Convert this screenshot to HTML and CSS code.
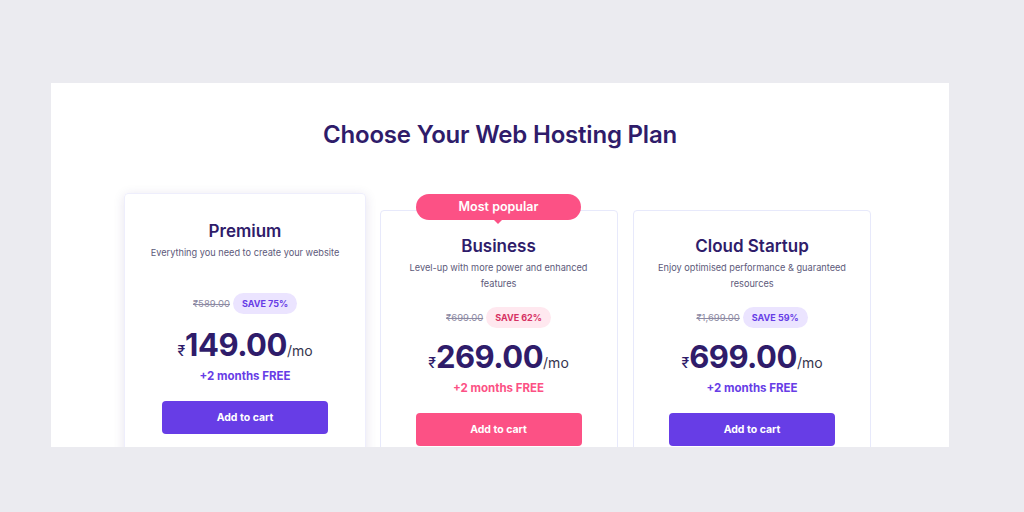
FILE: index.html
```html
<!DOCTYPE html>
<html lang="en">

<head>
    <meta charset="UTF-8">
    <meta name="viewport" content="width=device-width, initial-scale=1.0">
    <title>Choose Your Web Hosting Plan</title>
    <link rel="stylesheet" href="styles.css">
</head>

<body>
    <div class="panel">
        <h1 class="title">Choose Your Web Hosting Plan</h1>

        <div class="plans">
            <div class="card featured">
                <h2 class="plan-name">Premium</h2>
                <p class="plan-desc">Everything you need to create your website</p>
                <div class="discount">
                    <span class="old-price">₹589.00</span>
                    <span class="save">SAVE 75%</span>
                </div>
                <div class="price">
                    <span class="currency">₹</span><span class="amount">149.00</span><span class="period">/mo</span>
                </div>
                <div class="bonus">+2 months FREE</div>
                <button type="button" class="cart-btn">Add to cart</button>
            </div>

            <div class="card popular">
                <div class="ribbon">Most popular</div>
                <h2 class="plan-name">Business</h2>
                <p class="plan-desc">Level-up with more power and enhanced features</p>
                <div class="discount">
                    <span class="old-price">₹699.00</span>
                    <span class="save">SAVE 62%</span>
                </div>
                <div class="price">
                    <span class="currency">₹</span><span class="amount">269.00</span><span class="period">/mo</span>
                </div>
                <div class="bonus">+2 months FREE</div>
                <button type="button" class="cart-btn">Add to cart</button>
            </div>

            <div class="card">
                <h2 class="plan-name">Cloud Startup</h2>
                <p class="plan-desc">Enjoy optimised performance &amp; guaranteed resources</p>
                <div class="discount">
                    <span class="old-price">₹1,699.00</span>
                    <span class="save">SAVE 59%</span>
                </div>
                <div class="price">
                    <span class="currency">₹</span><span class="amount">699.00</span><span class="period">/mo</span>
                </div>
                <div class="bonus">+2 months FREE</div>
                <button type="button" class="cart-btn">Add to cart</button>
            </div>
        </div>
    </div>
</body>

</html>
```

FILE: styles.css
```css
body {
    margin: 0;
    background-color: #ebebf0;
    font-family: Inter, "Noto Sans", sans-serif;
    color: #2f1c6a;
}

.panel {
    margin: 83px 0 0 51px;
    width: 898px;
    height: 364px;
    background: white;
    overflow: hidden;
}

.title {
    margin: 0;
    padding-top: 36px;
    text-align: center;
    font-size: 24px;
    font-weight: 600;
    letter-spacing: -0.2px;
    line-height: 32px;
}

.plans {
    display: grid;
    grid-template-columns: repeat(3, 238px);
    column-gap: 15.5px;
    justify-content: center;
    align-items: start;
    margin-left: -3px;
}

.card {
    position: relative;
    margin-top: 59px;
    padding: 24px 18px;
    border: 1px solid #e7e9fb;
    border-radius: 4px;
    text-align: center;
    height: 260px;
}

.card.featured {
    margin: 42px -2px 0;
    padding-top: 26px;
    border-color: #eeeefc;
    box-shadow: 0 2px 12px rgba(47, 28, 106, 0.12);
}

.ribbon {
    position: absolute;
    top: -17px;
    left: 0;
    right: 0;
    margin: 0 auto;
    width: 165px;
    height: 26px;
    line-height: 26px;
    border-radius: 13px;
    background-color: #fc5185;
    color: white;
    font-size: 12.5px;
    font-weight: 600;
}

.ribbon::after {
    content: "";
    position: absolute;
    left: 78px;
    bottom: -4px;
    border-left: 4px solid transparent;
    border-right: 4px solid transparent;
    border-top: 4px solid #fc5185;
}

.plan-name {
    margin: 0;
    font-size: 17px;
    font-weight: 600;
    line-height: 22px;
}

.plan-desc {
    margin: 3px 0 0;
    min-height: 32px;
    font-size: 9.2px;
    line-height: 16px;
    color: #5d5a7a;
}

.discount {
    display: flex;
    justify-content: center;
    align-items: center;
    gap: 3px;
    margin-top: 15px;
}

.featured .discount {
    margin-top: 16px;
}

.old-price {
    font-size: 9.5px;
    color: #8d8aa3;
    text-decoration: line-through;
}

.save {
    padding: 0 9px;
    height: 21px;
    line-height: 21px;
    border-radius: 11px;
    background-color: #ebe4ff;
    color: #673de6;
    font-size: 9px;
    font-weight: 700;
}

.popular .save {
    background-color: #ffe8ef;
    color: #d63163;
}

.price {
    margin-top: 10px;
    height: 38px;
    line-height: 38px;
    white-space: nowrap;
}

.featured .price {
    margin-top: 12px;
}

.currency {
    font-size: 14px;
    font-weight: 500;
}

.amount {
    font-size: 31px;
    font-weight: 700;
    letter-spacing: -0.5px;
}

.period {
    font-size: 14px;
    color: #36344d;
}

.bonus {
    margin-top: 4px;
    font-size: 11.5px;
    line-height: 16px;
    font-weight: 700;
    color: #673de6;
}

.popular .bonus {
    color: #fc5185;
}

.cart-btn {
    display: block;
    margin: 17px auto 0;
    width: 166px;
    height: 33px;
    background-color: #673de6;
    color: white;
    border: none;
    border-radius: 4px;
    font-family: inherit;
    font-size: 10.5px;
    font-weight: 700;
    cursor: pointer;
}

.popular .cart-btn {
    background-color: #fc5185;
}
```
